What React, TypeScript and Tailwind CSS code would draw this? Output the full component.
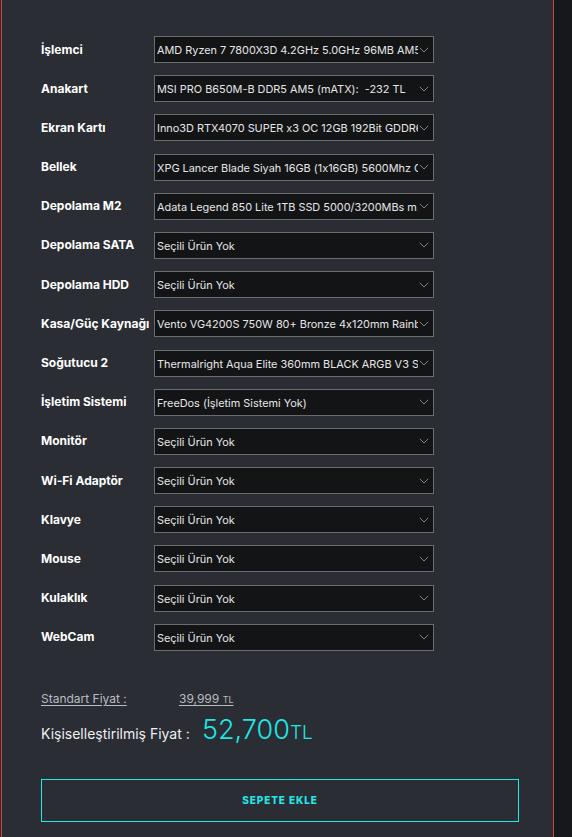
import React from "react";

const rows: [string, string][] = [
  ["İşlemci", "AMD Ryzen 7 7800X3D 4.2GHz 5.0GHz 96MB AM5 ∙ 8 Çekirdek"],
  ["Anakart", "MSI PRO B650M-B DDR5 AM5 (mATX):  -232 TL"],
  ["Ekran Kartı", "Inno3D RTX4070 SUPER x3 OC 12GB 192Bit GDDR6X"],
  ["Bellek", "XPG Lancer Blade Siyah 16GB (1x16GB) 5600Mhz CL46"],
  ["Depolama M2", "Adata Legend 850 Lite 1TB SSD 5000/3200MBs m.2"],
  ["Depolama SATA", "Seçili Ürün Yok"],
  ["Depolama HDD", "Seçili Ürün Yok"],
  ["Kasa/Güç Kaynağı", "Vento VG4200S 750W 80+ Bronze 4x120mm Rainbow"],
  ["Soğutucu 2", "Thermalright Aqua Elite 360mm BLACK ARGB V3 Sıvı"],
  ["İşletim Sistemi", "FreeDos (İşletim Sistemi Yok)"],
  ["Monitör", "Seçili Ürün Yok"],
  ["Wi-Fi Adaptör", "Seçili Ürün Yok"],
  ["Klavye", "Seçili Ürün Yok"],
  ["Mouse", "Seçili Ürün Yok"],
  ["Kulaklık", "Seçili Ürün Yok"],
  ["WebCam", "Seçili Ürün Yok"],
];

function Chevron() {
  return (
    <svg width="10" height="6" viewBox="0 0 10 6" fill="none" className="shrink-0">
      <path d="M0.8 0.8 L5 5 L9.2 0.8" stroke="#808080" strokeWidth="1" />
    </svg>
  );
}

export default function App() {
  return (
    <div
      className="flex min-h-screen bg-[#17181c] [font-feature-settings:'calt'_0]"
      style={{ fontFamily: "Inter, 'Noto Sans', sans-serif" }}
    >
      <div className="w-[1px] bg-[#2a2d33]" />
      <div className="w-[553px] bg-[#2a2d33] border-l border-r border-[#d0453a] pl-[39px] pr-[34px] pt-[36px] pb-[16px]">
        <div className="flex flex-col gap-[12.2px]">
          {rows.map(([label, value]) => (
            <div key={label} className="flex items-center h-[27px]">
              <div className="w-[113px] shrink-0 text-[12px] font-bold text-white whitespace-nowrap">
                {label}
              </div>
              <div className="relative w-[280px] h-[27px] bg-[#131416] border border-[#6c6c6c] flex items-center pl-[2px] pr-[3px]">
                <div className="flex-1 overflow-hidden whitespace-pre text-[10.9px] text-[#e6e6e6] leading-[12px] pt-[1px] pr-[2px]">
                  {value}
                </div>
                <div className="w-[12px] flex justify-center items-center">
                  <Chevron />
                </div>
              </div>
            </div>
          ))}
        </div>

        <div className="mt-[39px] flex items-baseline text-[12px] text-[#b9bcc2]">
          <span className="underline underline-offset-2 w-[138px]">Standart Fiyat :</span>
          <span className="underline underline-offset-2">
            39,999 <span className="text-[9px]">TL</span>
          </span>
        </div>

        <div className="mt-[8px] flex items-baseline">
          <span className="text-[14px] text-[#eef0f2] w-[161px]">Kişiselleştirilmiş Fiyat :</span>
          <span className="text-[27px] font-light text-[#1ee6e6] leading-none">52,700</span>
          <span className="text-[19px] font-light text-[#1ee6e6] leading-none">TL</span>
        </div>

        <button className="mt-[35px] w-[478px] h-[43px] border border-[#21e8e8] flex items-center justify-center text-[10px] font-extrabold tracking-[0.09em] text-[#21e8e8]">
          SEPETE EKLE
        </button>
      </div>
    </div>
  );
}
